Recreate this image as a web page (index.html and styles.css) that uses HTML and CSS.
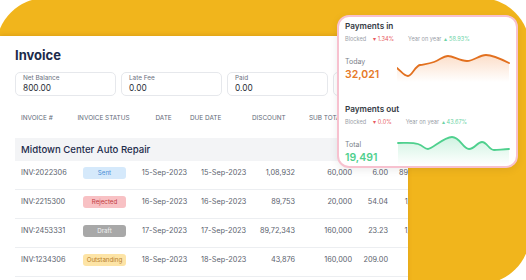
FILE: index.html
```html
<!DOCTYPE html>
<html lang="en">
<head>
<meta charset="utf-8">
<title>Invoice</title>
<link rel="stylesheet" href="styles.css">
</head>
<body>
<div class="stage">
  <div class="backdrop"></div>

  <section class="panel">
    <h1 class="title">Invoice</h1>
    <div class="fields">
      <div class="field"><span class="field-label">Net Balance</span><span class="field-value">800.00</span></div>
      <div class="field"><span class="field-label">Late Fee</span><span class="field-value">0.00</span></div>
      <div class="field"><span class="field-label">Paid</span><span class="field-value">0.00</span></div>
      <div class="field"><span class="field-label">Balance</span><span class="field-value">800.00</span></div>
    </div>

    <div class="table">
      <div class="thead">
        <span class="c1">INVOICE #</span>
        <span class="c2">INVOICE STATUS</span>
        <span class="c3">DATE</span>
        <span class="c4">DUE DATE</span>
        <span class="c5">DISCOUNT</span>
        <span class="c6">SUB TOTAL</span>
        <span class="c7">TAX</span>
        <span class="c8">TOTAL</span>
      </div>
      <div class="group">Midtown Center Auto Repair</div>
      <div class="row">
        <span class="c1">INV:2022306</span>
        <span class="c2"><span class="badge sent">Sent</span></span>
        <span class="c3">15-Sep-2023</span>
        <span class="c4">15-Sep-2023</span>
        <span class="c5">1,08,932</span>
        <span class="c6">60,000</span>
        <span class="c7">6.00</span>
        <span class="c8">89,723.00</span>
      </div>
      <div class="row">
        <span class="c1">INV:2215300</span>
        <span class="c2"><span class="badge rejected">Rejected</span></span>
        <span class="c3">16-Sep-2023</span>
        <span class="c4">16-Sep-2023</span>
        <span class="c5">89,753</span>
        <span class="c6">20,000</span>
        <span class="c7">54.04</span>
        <span class="c8">1,08,932</span>
      </div>
      <div class="row">
        <span class="c1">INV:2453331</span>
        <span class="c2"><span class="badge draft">Draft</span></span>
        <span class="c3">17-Sep-2023</span>
        <span class="c4">17-Sep-2023</span>
        <span class="c5">89,72,343</span>
        <span class="c6">160,000</span>
        <span class="c7">23.23</span>
        <span class="c8">1,60,000</span>
      </div>
      <div class="row">
        <span class="c1">INV:1234306</span>
        <span class="c2"><span class="badge outstanding">Outstanding</span></span>
        <span class="c3">18-Sep-2023</span>
        <span class="c4">18-Sep-2023</span>
        <span class="c5">43,876</span>
        <span class="c6">160,000</span>
        <span class="c7">209.00</span>
        <span class="c8">43,876</span>
      </div>
    </div>
  </section>

  <aside class="card">
    <div class="metric">
      <h2 class="metric-title">Payments in</h2>
      <div class="stats">
        <span class="stat-label">Blocked</span>
        <span class="down">&#9662; 1.34%</span>
        <span class="stat-label yoy">Year on year</span>
        <span class="up">&#9652; 58.93%</span>
      </div>
      <div class="spark-row">
        <div class="figure">
          <span class="fig-label">Today</span>
          <span class="fig-value orange">32,021</span>
        </div>
        <svg class="spark" viewBox="0 0 113 30" width="113" height="30">
          <defs>
            <linearGradient id="gIn" x1="0" y1="0" x2="0" y2="1">
              <stop offset="0" stop-color="#f6a064" stop-opacity="0.35"/>
              <stop offset="1" stop-color="#f6a064" stop-opacity="0"/>
            </linearGradient>
          </defs>
          <path d="M0 16 C4 19 7 24 11 24 S18 14 23 13 S31 12 37 10 S46 4 51 4 S63 9 70 9 S82 3 89 3 S104 7 112 11 L112 30 L0 30 Z" fill="url(#gIn)"/>
          <path d="M0 16 C4 19 7 24 11 24 S18 14 23 13 S31 12 37 10 S46 4 51 4 S63 9 70 9 S82 3 89 3 S104 7 112 11" fill="none" stroke="#e2701f" stroke-width="1.8" stroke-linecap="round"/>
        </svg>
      </div>
    </div>
    <div class="metric second">
      <h2 class="metric-title">Payments out</h2>
      <div class="stats">
        <span class="stat-label">Blocked</span>
        <span class="down">&#9662; 0.0%</span>
        <span class="stat-label yoy">Year on year</span>
        <span class="up">&#9652; 43.67%</span>
      </div>
      <div class="spark-row">
        <div class="figure">
          <span class="fig-label">Total</span>
          <span class="fig-value green">19,491</span>
        </div>
        <svg class="spark" viewBox="0 0 113 30" width="113" height="30">
          <defs>
            <linearGradient id="gOut" x1="0" y1="0" x2="0" y2="1">
              <stop offset="0" stop-color="#5fd69b" stop-opacity="0.3"/>
              <stop offset="1" stop-color="#5fd69b" stop-opacity="0"/>
            </linearGradient>
          </defs>
          <path d="M1 8 C8 8 15 7 21 9 S27 14 31 14 S47 2 55 2 S66 14 72 14 S80 7 85 7 S92 15 97 15 S106 14 112 14 L112 30 L1 30 Z" fill="url(#gOut)"/>
          <path d="M1 8 C8 8 15 7 21 9 S27 14 31 14 S47 2 55 2 S66 14 72 14 S80 7 85 7 S92 15 97 15 S106 14 112 14" fill="none" stroke="#4fd08e" stroke-width="1.8" stroke-linecap="round"/>
        </svg>
      </div>
    </div>
  </aside>
</div>
</body>
</html>
```

FILE: styles.css
```css
* { box-sizing: border-box; margin: 0; padding: 0; }

html, body {
  width: 526px;
  height: 280px;
  overflow: hidden;
  background: #ffffff;
}

body {
  font-family: Inter, "Noto Sans", "Liberation Sans", sans-serif;
  color: #1f2a44;
}

.stage {
  position: relative;
  width: 526px;
  height: 280px;
  overflow: hidden;
}

.backdrop {
  position: absolute;
  left: -4px;
  top: -2px;
  width: 534px;
  height: 286px;
  border-radius: 50px;
  background: #f1b51c;
}

.panel {
  position: absolute;
  left: 0;
  top: 36px;
  width: 408px;
  height: 250px;
  background: #ffffff;
  overflow: hidden;
  padding: 10px 0 0 15px;
  box-shadow: 0 -1px 4px rgba(140, 80, 0, 0.2);
}

.title {
  font-size: 13px;
  line-height: 18px;
  font-weight: 700;
  color: #1c2b4b;
}

.fields {
  display: flex;
  gap: 5px;
  margin-top: 8px;
}

.field {
  flex: 0 0 101px;
  height: 24px;
  border: 1px solid #e6e8ec;
  border-radius: 5px;
  padding: 1px 7px 0 7px;
  display: flex;
  flex-direction: column;
  white-space: nowrap;
}

.field-label {
  font-size: 6.4px;
  line-height: 9px;
  color: #6b7280;
}

.field-value {
  font-size: 8.3px;
  line-height: 11px;
  color: #2a2f38;
}

.table {
  width: 430px;
  margin-top: 8px;
  white-space: nowrap;
}

.thead, .row {
  display: grid;
  grid-template-columns: 55px 67px 53px 62px 48px 55px 37px 53px;
}

.thead {
  height: 34px;
  padding-top: 10px;
  font-size: 6.4px;
  line-height: 8px;
  color: #626a78;
}

.thead .c1 { padding-left: 6px; }
.thead .c2, .thead .c3 { text-align: center; }
.thead .c6 { padding-left: 9px; }

.group {
  height: 23px;
  line-height: 23px;
  background: #f3f4f6;
  padding-left: 6px;
  font-size: 9.6px;
  font-weight: 500;
  color: #1c2b4b;
}

.row {
  height: 29px;
  border-bottom: 1px solid #eceef1;
  padding-top: 6px;
  font-size: 7.3px;
  line-height: 12px;
  color: #5a616d;
}

.row .c1 { padding-left: 6px; }
.row .c2 { display: flex; justify-content: center; padding-left: 2px; }
.row .c3 { text-align: center; padding-left: 2px; }
.row .c4 { padding-left: 11px; }
.row .c5 { text-align: right; padding-right: 5px; }
.row .c6 { text-align: right; padding-right: 3px; }
.row .c7 { text-align: right; padding-right: 4px; }
.row .c8 { text-align: right; padding-right: 11px; }

.badge {
  display: inline-block;
  width: 43px;
  height: 12px;
  line-height: 12px;
  border-radius: 3px;
  text-align: center;
  font-size: 6.2px;
}

.sent { background: #d5e9fb; color: #4b8fd6; }
.rejected { background: #f8c1c4; color: #c23a3d; }
.draft { background: #a8a8a8; color: #f2f2f2; }
.outstanding { background: #fde4a6; color: #b67d2a; }

.card {
  position: absolute;
  left: 337px;
  top: 15px;
  width: 181px;
  height: 153px;
  background: #ffffff;
  border: 2px solid #f7c1cf;
  border-radius: 12px;
  padding: 3px 6px 0 6px;
  box-shadow: 0 2px 8px rgba(0, 0, 0, 0.08);
  white-space: nowrap;
}

.metric-title {
  font-size: 8.2px;
  line-height: 12px;
  font-weight: 600;
  color: #343a44;
}

.second { margin-top: 21px; }

.stats {
  display: flex;
  align-items: center;
  margin-top: 2px;
  height: 10px;
  font-size: 5.6px;
}

.stat-label { color: #9aa0a8; }
.down { color: #e8595e; margin-left: 7px; }
.yoy { margin-left: 14px; }
.up { color: #6cd3a6; margin-left: 3px; }

.spark-row {
  display: flex;
  margin-top: 8px;
  height: 30px;
}

.figure {
  width: 55px;
  display: flex;
  flex-direction: column;
  justify-content: flex-end;
}

.fig-label {
  font-size: 7px;
  line-height: 10px;
  color: #7b818a;
}

.fig-value {
  margin-top: 1px;
  font-size: 10.5px;
  line-height: 14px;
  font-weight: 600;
}

.orange { color: #e67a2a; }
.green { color: #4fcf8d; }

.spark {
  display: block;
  flex: 0 0 113px;
}
```
